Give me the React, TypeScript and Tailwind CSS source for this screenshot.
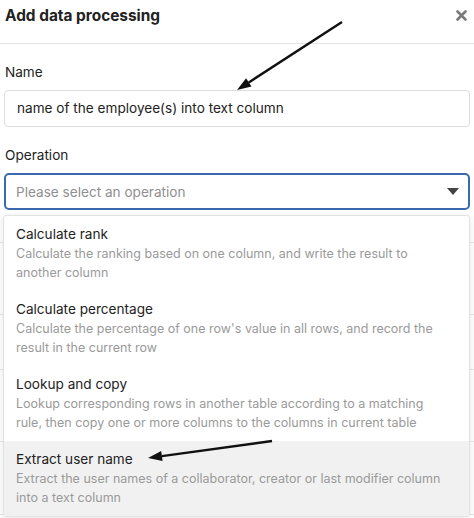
const options = [
  {
    title: "Calculate rank",
    desc: "Calculate the ranking based on one column, and write the result to another column",
  },
  {
    title: "Calculate percentage",
    desc: "Calculate the percentage of one row's value in all rows, and record the result in the current row",
  },
  {
    title: "Lookup and copy",
    desc: "Lookup corresponding rows in another table according to a matching rule, then copy one or more columns to the columns in current table",
  },
  {
    title: "Extract user name",
    desc: "Extract the user names of a collaborator, creator or last modifier column into a text column",
    active: true,
  },
];

export default function App() {
  return (
    <div className="relative h-[518px] w-[474px] overflow-hidden bg-white font-['Inter',sans-serif] text-[#222]">
      <header className="flex h-[44px] items-start justify-between border-b border-[#e3e3e3] pl-[5px] pr-[7px] pt-[5px]">
        <h1 className="text-[15.4px] font-bold leading-[22px]">Add data processing</h1>
        <svg width="11" height="11" viewBox="0 0 11 11" className="mt-[5px]">
          <path d="M1.5 1.5 L9.5 9.5 M9.5 1.5 L1.5 9.5" stroke="#7a7a7a" strokeWidth="2.6" strokeLinecap="round" />
        </svg>
      </header>

      <div className="px-[4px]">
        <label className="mt-[18px] block pl-[1px] text-[13.6px] leading-5">Name</label>
        <div className="mt-[8px] flex h-[37px] items-center rounded-[4px] border border-[#dedede] pl-[12px] text-[13.6px]">
          name of the employee(s) into text column
        </div>

        <label className="mt-[18px] block pl-[1px] text-[13.6px] leading-5">Operation</label>
        <div className="mt-[8px] flex h-[37px] items-center justify-between rounded-[5px] border-2 border-[#3a69ad] pl-[10px] pr-[9px] text-[13.6px] text-[#8f8f8f]">
          <span className="pt-[2px]">Please select an operation</span>
          <svg width="12" height="8" viewBox="0 0 12 8">
            <polygon points="0,0 12,0 6,7" fill="#444" />
          </svg>
        </div>

        {/* form rows underneath the open menu */}
        <div className="-mx-[4px]">
          <div className="h-[33px] border-b border-[#e6e6e6]" />
          <div className="h-[72px] border-b border-[#e6e6e6]" />
          <div className="h-[55px] border-b border-[#e6e6e6]" />
          <div className="h-[72px] border-b border-[#e6e6e6]" />
          <div className="h-[73px] border-b border-[#e6e6e6]" />
        </div>
      </div>

      <ul className="absolute left-[3px] top-[215px] w-[467px] rounded-[3px] border border-[#e2e2e2] bg-white shadow-[0_2px_8px_rgba(0,0,0,0.1)]">
        {options.map((o) => (
          <li
            key={o.title}
            className={`pl-[12px] pr-[20px] pt-[8px] pb-[9px] ${o.active ? "bg-[#f1f1f1]" : ""}`}
          >
            <div className="text-[13.6px] leading-5 text-[#222]">{o.title}</div>
            <div className="text-[12.5px] leading-[19px] text-[#9a9a9a]">{o.desc}</div>
          </li>
        ))}
      </ul>

      <svg className="pointer-events-none absolute inset-0" width="474" height="518">
        <line x1="342" y1="22" x2="248.8" y2="82.4" stroke="#111" strokeWidth="2.4" />
        <polygon points="237,90 251.5,86.6 246.1,78.2" fill="#111" />
        <line x1="272" y1="441" x2="161.9" y2="456.1" stroke="#111" strokeWidth="2.4" />
        <polygon points="148,458 161.2,451.1 162.6,461.1" fill="#111" />
      </svg>
    </div>
  );
}
